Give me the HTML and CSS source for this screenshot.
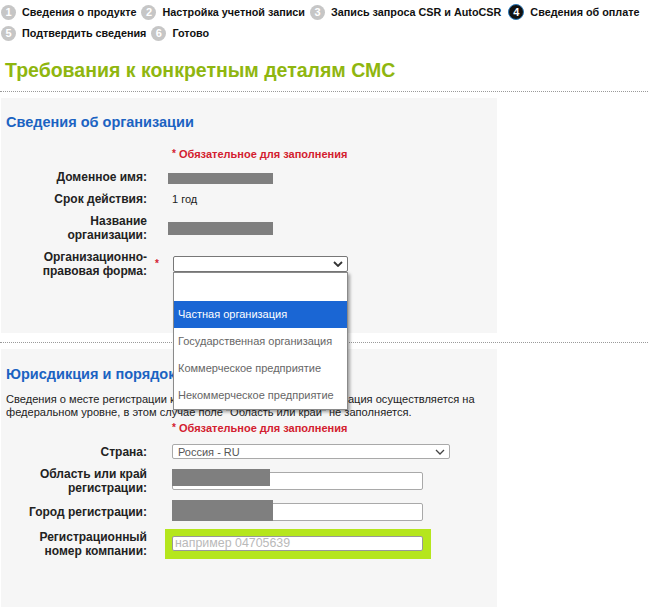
FILE: index.html
```html
<!DOCTYPE html>
<html lang="ru">
<head>
<meta charset="utf-8">
<title>Требования к конкретным деталям СМС</title>
<link rel="stylesheet" href="styles.css">
</head>
<body>
<div class="steps">
  <span class="step"><span class="num">1</span>Сведения о продукте</span>
  <span class="step"><span class="num">2</span>Настройка учетной записи</span>
  <span class="step"><span class="num">3</span>Запись запроса CSR и AutoCSR</span>
  <span class="step"><span class="num current">4</span>Сведения об оплате</span>
  <span class="step"><span class="num">5</span>Подтвердить сведения</span>
  <span class="step"><span class="num">6</span>Готово</span>
</div>

<h1 class="title">Требования к конкретным деталям СМС</h1>
<div class="sep"></div>

<section class="panel panel-org">
  <h2 class="panel-title">Сведения об организации</h2>
  <div class="row">
    <div class="lbl"></div><div class="star"></div>
    <div class="val req"><span class="req-star">*</span> Обязательное для заполнения</div>
  </div>
  <div class="row">
    <div class="lbl">Доменное имя:</div><div class="star"></div>
    <div class="val"><span class="redact redact-domain"></span></div>
  </div>
  <div class="row">
    <div class="lbl">Срок действия:</div><div class="star"></div>
    <div class="val">1 год</div>
  </div>
  <div class="row">
    <div class="lbl">Название<br>организации:</div><div class="star"></div>
    <div class="val"><span class="redact redact-name"></span></div>
  </div>
  <div class="row">
    <div class="lbl">Организационно-<br>правовая форма:</div>
    <div class="star"><span class="req-star">*</span></div>
    <div class="val">
      <div class="select select-org">
        <span class="select-text"></span>
        <svg class="chev" width="10" height="6" viewBox="0 0 10 6"><path d="M1 1 L5 5 L9 1" fill="none" stroke="#333" stroke-width="1.8"/></svg>
        <ul class="dropdown">
          <li class="opt"></li>
          <li class="opt opt-active">Частная организация</li>
          <li class="opt">Государственная организация</li>
          <li class="opt">Коммерческое предприятие</li>
          <li class="opt">Некоммерческое предприятие</li>
        </ul>
      </div>
    </div>
  </div>
</section>

<div class="sep"></div>

<section class="panel panel-jur">
  <h2 class="panel-title">Юрисдикция и порядок регистрации</h2>
  <p class="note">Сведения о месте регистрации компании. В ряде случаев регистрация осуществляется на федеральном уровне, в этом случае поле "Область или край" не заполняется.</p>
  <div class="row">
    <div class="lbl"></div><div class="star"></div>
    <div class="val req"><span class="req-star">*</span> Обязательное для заполнения</div>
  </div>
  <div class="row">
    <div class="lbl">Страна:</div><div class="star"></div>
    <div class="val">
      <div class="select select-country">
        <span class="select-text">Россия - RU</span>
        <svg class="chev" width="10" height="6" viewBox="0 0 10 6"><path d="M1 1 L5 5 L9 1" fill="none" stroke="#444" stroke-width="1.3"/></svg>
      </div>
    </div>
  </div>
  <div class="row">
    <div class="lbl">Область или край<br>регистрации:</div><div class="star"></div>
    <div class="val">
      <div class="field"><span class="input"></span><span class="redact redact-region"></span></div>
    </div>
  </div>
  <div class="row">
    <div class="lbl">Город регистрации:</div><div class="star"></div>
    <div class="val">
      <div class="field"><span class="input"></span><span class="redact redact-city"></span></div>
    </div>
  </div>
  <div class="row">
    <div class="lbl">Регистрационный<br>номер компании:</div><div class="star"></div>
    <div class="val">
      <div class="highlight"><span class="input input-ph">например 04705639</span></div>
    </div>
  </div>
</section>
</body>
</html>
```

FILE: styles.css
```css
* { box-sizing: border-box; }

body {
  margin: 0;
  font-family: "Liberation Sans", Arial, sans-serif;
  font-size: 12px;
  color: #222;
  background: #fff;
}

/* steps */
.steps {
  display: flex;
  flex-wrap: wrap;
  column-gap: 5px;
  row-gap: 5px;
  padding: 4px 0 0 1px;
  width: 648px;
}
.step {
  display: flex;
  align-items: center;
  height: 16px;
  font-size: 10.8px;
  font-weight: bold;
  color: #111;
  white-space: nowrap;
}
.num {
  flex: none;
  width: 15px;
  height: 15px;
  border-radius: 50%;
  background: #c6c6c6;
  color: #fff;
  font-size: 11px;
  font-weight: bold;
  display: flex;
  align-items: center;
  justify-content: center;
  margin-right: 6px;
}
.num.current {
  width: 16px;
  height: 16px;
  background: #111;
  border: 1.5px solid #2a78b8;
  margin-left: 2px;
}

/* title */
.title {
  margin: 17px 0 0 5px;
  font-size: 19.5px;
  line-height: 24px;
  font-weight: bold;
  color: #8fb60f;
}
.sep {
  margin: 9px 0 6px 0;
  border-top: 1px dotted #9a9a9a;
  height: 0;
}

/* panels */
.panel {
  width: 496px;
  margin-left: 1px;
  background: #f6f6f6;
  padding: 15px 5px 0 5px;
}
.panel-org { height: 235px; }
.panel-jur { height: 262px; padding-top: 16px; }

.panel-title {
  margin: 0;
  font-size: 14.5px;
  line-height: 18px;
  font-weight: bold;
  color: #1b63c2;
}

.note {
  margin: 10px 0 0 0;
  line-height: 12.5px;
  font-size: 11.1px;
  color: #222;
}

/* rows */
.row {
  display: flex;
  align-items: center;
  margin-top: 8px;
}
.panel-org .panel-title + .row { margin-top: 16px; }
.note + .row { margin-top: 3px; }

.lbl {
  width: 141px;
  text-align: right;
  font-weight: bold;
  line-height: 14px;
  color: #222;
}
.star {
  width: 25px;
  padding-left: 8px;
  line-height: 14px;
}
.val {
  line-height: 14px;
  font-size: 11px;
  position: relative;
}

.req {
  color: #d3202f;
  font-size: 11px;
  font-weight: bold;
}
.req-star {
  color: #d3202f;
  font-size: 10px;
  font-weight: bold;
  position: relative;
  top: -1px;
}

.redact {
  display: inline-block;
  background: #7f7f7f;
  vertical-align: middle;
}
.redact-domain { width: 105px; height: 11px; margin-left: -4px; }
.redact-name { width: 105px; height: 13px; margin-left: -4px; margin-top: -2px; }

/* selects */
.select {
  position: relative;
  background: #fff;
  border: 1px solid #777;
  border-radius: 2px;
  display: flex;
  align-items: center;
}
.select-org { width: 175px; height: 16px; margin-left: 1px; }
.select-country { width: 278px; height: 15px; border-color: #a9a9a9; }
.select-text {
  flex: 1;
  padding-left: 5px;
  color: #555;
  font-size: 11px;
}
.chev { margin-right: 4px; }

.dropdown {
  position: absolute;
  top: 15px;
  left: -1px;
  width: 175px;
  margin: 0;
  padding: 0;
  list-style: none;
  background: #fff;
  border: 1px solid #8a8a8a;
  box-shadow: 2px 2px 3px rgba(0,0,0,0.35);
  z-index: 10;
}
.opt {
  height: 27px;
  line-height: 27px;
  padding-left: 4px;
  font-size: 11px;
  color: #666;
  white-space: nowrap;
}
.opt:first-child { height: 28px; }
.opt-active {
  background: #1a66d4;
  color: #fff;
}

/* inputs */
.field {
  position: relative;
  width: 251px;
}
.input {
  display: block;
  width: 251px;
  height: 18px;
  background: #fff;
  border: 1px solid #a9a9a9;
  border-radius: 2px;
}
.redact-region {
  position: absolute;
  left: 0;
  top: -3px;
  width: 98px;
  height: 17px;
}
.redact-city {
  position: absolute;
  left: 0;
  top: -3px;
  width: 101px;
  height: 21px;
}
.highlight {
  margin-left: -7px;
  width: 266px;
  background: #b5e61d;
  padding: 7px 8px 8px 7px;
}
.input-ph {
  height: 15px;
  line-height: 13px;
  padding-left: 2px;
  color: #b9b9b9;
  font-size: 12.4px;
  border-color: #999;
}
```
